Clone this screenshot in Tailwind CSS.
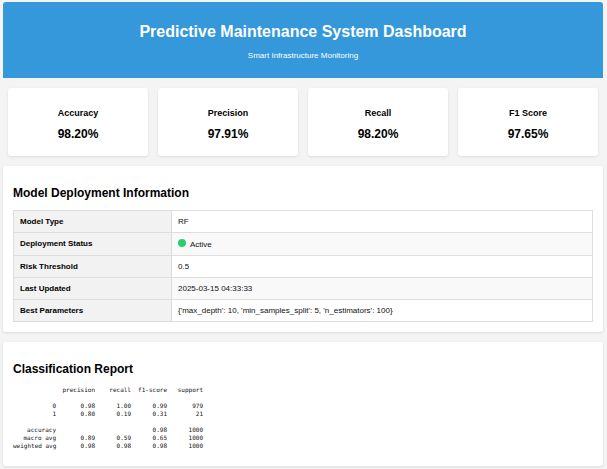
<!DOCTYPE html>
<html lang="en">
<head>
<meta charset="utf-8">
<meta name="viewport" content="width=device-width, initial-scale=1">
<title>Predictive Maintenance System Dashboard</title>
<script src="https://cdn.jsdelivr.net/npm/@tailwindcss/browser@4"></script>
</head>
<body class="bg-[#f4f4f4] pt-[2px] pr-1 pb-[3px] pl-[3px] font-['Liberation_Sans',Arial,sans-serif] text-[8px] leading-[9px] text-[#111]">
<header class="rounded-t-[3px] bg-[#3498db] pt-[21px] pb-[18px] text-center text-white">
  <h1 class="text-[16px] leading-[18px] font-bold">Predictive Maintenance System Dashboard</h1>
  <p class="mt-[10px]">Smart Infrastructure Monitoring</p>
</header>
<main class="flex flex-col gap-[10px] pt-[10px]">
  <section class="grid grid-cols-4 gap-[10px] px-[5px] text-center font-bold text-black">
    <div class="rounded-[3px] bg-white pt-5 pb-[15px] shadow-[0_1px_3px_rgba(0,0,0,0.1)]">
      <h2 class="text-[9px] leading-[10px]">Accuracy</h2>
      <p class="mt-[9px] text-[12px] leading-[14px]">98.20%</p>
    </div>
    <div class="rounded-[3px] bg-white pt-5 pb-[15px] shadow-[0_1px_3px_rgba(0,0,0,0.1)]">
      <h2 class="text-[9px] leading-[10px]">Precision</h2>
      <p class="mt-[9px] text-[12px] leading-[14px]">97.91%</p>
    </div>
    <div class="rounded-[3px] bg-white pt-5 pb-[15px] shadow-[0_1px_3px_rgba(0,0,0,0.1)]">
      <h2 class="text-[9px] leading-[10px]">Recall</h2>
      <p class="mt-[9px] text-[12px] leading-[14px]">98.20%</p>
    </div>
    <div class="rounded-[3px] bg-white pt-5 pb-[15px] shadow-[0_1px_3px_rgba(0,0,0,0.1)]">
      <h2 class="text-[9px] leading-[10px]">F1 Score</h2>
      <p class="mt-[9px] text-[12px] leading-[14px]">97.65%</p>
    </div>
  </section>

  <section class="rounded-[3px] bg-white px-[10px] pt-5 pb-[10px] shadow-[0_1px_3px_rgba(0,0,0,0.1)]">
    <h2 class="mb-[10px] text-[12px] leading-[14px] font-bold text-black">Model Deployment Information</h2>
    <table class="w-full border-collapse text-left [&_td]:border [&_td]:border-[#ddd] [&_td]:px-[6px] [&_td]:py-[6px] [&_th]:w-[158px] [&_th]:border [&_th]:border-[#ddd] [&_th]:bg-[#f2f2f2] [&_th]:px-[6px] [&_th]:py-[6px] [&_th]:align-top [&_th]:font-bold [&_th]:text-black">
      <tbody>
        <tr><th scope="row">Model Type</th><td>RF</td></tr>
        <tr class="bg-[#f9f9f9]"><th scope="row">Deployment Status</th><td><span class="flex h-[10px] items-start gap-1"><span class="size-2 rounded-full bg-[#2ecc71]"></span><span class="pt-[1px]">Active</span></span></td></tr>
        <tr><th scope="row">Risk Threshold</th><td>0.5</td></tr>
        <tr class="bg-[#f9f9f9]"><th scope="row">Last Updated</th><td>2025-03-15 04:33:33</td></tr>
        <tr><th scope="row">Best Parameters</th><td>{'max_depth': 10, 'min_samples_split': 5, 'n_estimators': 100}</td></tr>
      </tbody>
    </table>
  </section>

  <section class="rounded-[3px] bg-white px-[10px] pt-5 pb-4 shadow-[0_1px_3px_rgba(0,0,0,0.1)]">
    <h2 class="mb-[10px] text-[12px] leading-[14px] font-bold text-black">Classification Report</h2>
    <table class="w-[190px] table-fixed text-right font-['DejaVu_Sans_Mono',monospace] text-[6px] leading-[8px] whitespace-nowrap [&_th]:font-normal">
      <colgroup><col class="w-[43px]"><col class="w-[39px]"><col class="w-[36px]"><col class="w-[36px]"><col class="w-[36px]"></colgroup>
      <thead>
        <tr><td></td><th scope="col">precision</th><th scope="col">recall</th><th scope="col">f1-score</th><th scope="col">support</th></tr>
      </thead>
      <tbody>
        <tr><th scope="row" class="pt-2">0</th><td class="pt-2">0.98</td><td class="pt-2">1.00</td><td class="pt-2">0.99</td><td class="pt-2">979</td></tr>
        <tr><th scope="row">1</th><td>0.80</td><td>0.19</td><td>0.31</td><td>21</td></tr>
      </tbody>
      <tbody>
        <tr><th scope="row" class="pt-2">accuracy</th><td></td><td></td><td class="pt-2">0.98</td><td class="pt-2">1000</td></tr>
        <tr><th scope="row">macro avg</th><td>0.89</td><td>0.59</td><td>0.65</td><td>1000</td></tr>
        <tr><th scope="row">weighted avg</th><td>0.98</td><td>0.98</td><td>0.98</td><td>1000</td></tr>
      </tbody>
    </table>
  </section>
</main>
</body>
</html>
